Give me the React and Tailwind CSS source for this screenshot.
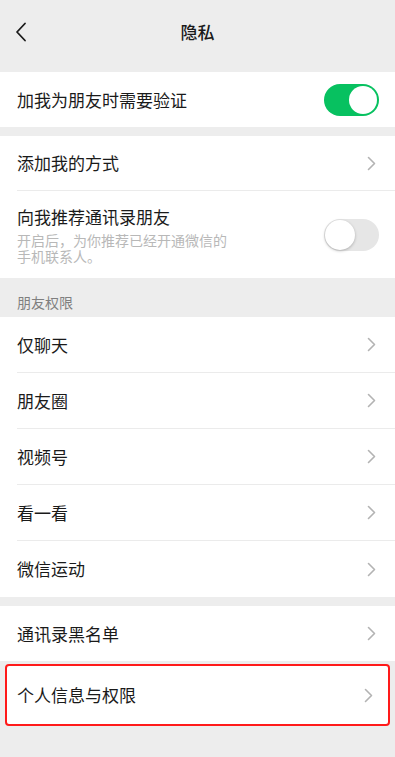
const font = { fontFamily: '"Noto Sans CJK SC", "Noto Sans", sans-serif' };

const Chevron = () => (
  <svg width="9" height="15" viewBox="0 0 9 15" fill="none">
    <path d="M1.5 1.5 L7.5 7.5 L1.5 13.5" stroke="#b3b3b3" strokeWidth="1.6" strokeLinecap="round" strokeLinejoin="round" />
  </svg>
);

const Toggle = ({ on }) =>
  on ? (
    <div className="w-[55px] h-[32px] rounded-full bg-[#07c160] flex items-center justify-end pr-[2px]">
      <div className="w-[28px] h-[28px] rounded-full bg-white" />
    </div>
  ) : (
    <div className="w-[55px] h-[32px] rounded-full bg-[#e6e6e6] flex items-center pl-[1px]">
      <div className="w-[30px] h-[30px] rounded-full bg-white shadow-[0_1px_3px_rgba(0,0,0,0.25)]" />
    </div>
  );

const Row = ({ label, divider, short }) => (
  <div className="pl-[17px] bg-white">
    <div
      className={`${short ? 'h-[55px]' : 'h-[56px]'} flex items-center justify-between pr-[19px] ${divider ? 'border-b border-[#ebebeb]' : ''}`}
    >
      <span className="text-[17px] text-[#1a1a1a]">{label}</span>
      <Chevron />
    </div>
  </div>
);

export default function App() {
  const friends = ['仅聊天', '朋友圈', '视频号', '看一看', '微信运动'];

  return (
    <div className="w-[395px] h-[757px] bg-[#ededed] overflow-hidden" style={font}>
      <div className="h-[72px] flex items-center justify-center relative">
        <div className="absolute left-[15px] top-[22px]">
          <svg width="12" height="20" viewBox="0 0 12 20" fill="none">
            <path d="M10 1.5 L2 10 L10 18.5" stroke="#1a1a1a" strokeWidth="1.8" strokeLinecap="round" strokeLinejoin="round" />
          </svg>
        </div>
        <span className="text-[17px] font-medium text-[#1a1a1a] -mt-[8px]">隐私</span>
      </div>

      <div className="bg-white h-[55px] flex items-center justify-between pl-[17px] pr-[16px]">
        <span className="text-[17px] text-[#1a1a1a]">加我为朋友时需要验证</span>
        <Toggle on />
      </div>

      <div className="h-[9px]" />

      <div className="bg-white">
        <Row label="添加我的方式" divider short />
        <div className="h-[87px] flex items-center justify-between pl-[17px] pr-[16px]">
          <div className="flex flex-col">
            <span className="text-[17px] text-[#1a1a1a] leading-[24px]">向我推荐通讯录朋友</span>
            <p className="w-[214px] text-[14px] text-[#b8b8b8] leading-[16px] mt-[3px]">
              开启后，为你推荐已经开通微信的手机联系人。
            </p>
          </div>
          <Toggle />
        </div>
      </div>

      <div className="h-[39px] flex items-end pl-[17px] pb-[4px]">
        <span className="text-[14px] text-[#7f7f7f]">朋友权限</span>
      </div>

      <div className="bg-white">
        {friends.map((f, i) => (
          <Row key={f} label={f} divider={i < friends.length - 1} />
        ))}
      </div>

      <div className="h-[9px]" />

      <div className="bg-white">
        <Row label="通讯录黑名单" short />
      </div>

      <div className="px-[5px] pt-[3px]">
        <div className="border-2 border-[#ff1a1a] rounded-[4px] bg-white h-[62px] flex items-center justify-between pl-[10px] pr-[15px]">
          <span className="text-[17px] text-[#1a1a1a]">个人信息与权限</span>
          <Chevron />
        </div>
      </div>
    </div>
  );
}
